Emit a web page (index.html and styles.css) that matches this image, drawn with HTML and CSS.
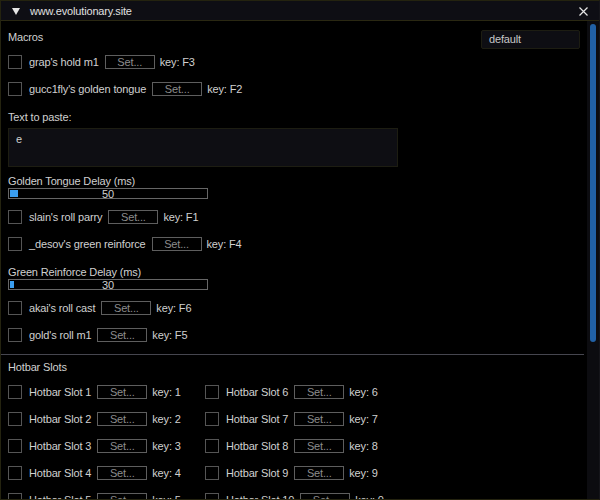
FILE: index.html
```html
<!DOCTYPE html>
<html lang="en">
<head>
    <meta name="viewport" content="width=device-width, initial-scale=1">
    <title>www.evolutionary.site</title>
    <link rel="stylesheet" href="styles.css">
</head>
<body>
    <div class="window">
        <div class="titlebar">
            <svg class="collapse" width="8" height="7" viewBox="0 0 8 7">
                <polygon points="0,0 8,0 4,7" fill="#e6e6e6"/>
            </svg>
            <span class="title">www.evolutionary.site</span>
            <svg class="close" width="9" height="9" viewBox="0 0 9 9">
                <path d="M0.5 0.5 L8.5 8.5 M8.5 0.5 L0.5 8.5" stroke="#e6e6e6" stroke-width="1.2"/>
            </svg>
        </div>
        <div class="body">
            <div class="content">
                <div class="header-row">
                    <span class="label">Macros</span>
                    <div class="input">default</div>
                </div>

                <div class="row first">
                    <div class="checkbox"></div>
                    <span class="name">grap's hold m1</span>
                    <div class="btn">Set...</div>
                    <span class="key">key: F3</span>
                </div>
                <div class="row">
                    <div class="checkbox"></div>
                    <span class="name">gucc1fly's golden tongue</span>
                    <div class="btn">Set...</div>
                    <span class="key">key: F2</span>
                </div>

                <div class="label section">Text to paste:</div>
                <div class="textarea">e</div>

                <div class="label slider-label">Golden Tongue Delay (ms)</div>
                <div class="slider">
                    <div class="grab grab-50"></div>
                    <span class="value">50</span>
                </div>

                <div class="row after-slider">
                    <div class="checkbox"></div>
                    <span class="name">slain's roll parry</span>
                    <div class="btn">Set...</div>
                    <span class="key">key: F1</span>
                </div>
                <div class="row">
                    <div class="checkbox"></div>
                    <span class="name">_desov's green reinforce</span>
                    <div class="btn">Set...</div>
                    <span class="key">key: F4</span>
                </div>

                <div class="label section">Green Reinforce Delay (ms)</div>
                <div class="slider">
                    <div class="grab grab-30"></div>
                    <span class="value">30</span>
                </div>

                <div class="row after-slider">
                    <div class="checkbox"></div>
                    <span class="name">akai's roll cast</span>
                    <div class="btn">Set...</div>
                    <span class="key">key: F6</span>
                </div>
                <div class="row">
                    <div class="checkbox"></div>
                    <span class="name">gold's roll m1</span>
                    <div class="btn">Set...</div>
                    <span class="key">key: F5</span>
                </div>

                <div class="separator"></div>

                <div class="label hotbar-title">Hotbar Slots</div>
                <div class="hotbar">
                    <div class="row"><div class="checkbox"></div><span class="name">Hotbar Slot 1</span><div class="btn">Set...</div><span class="key">key: 1</span></div>
                    <div class="row"><div class="checkbox"></div><span class="name">Hotbar Slot 6</span><div class="btn">Set...</div><span class="key">key: 6</span></div>
                    <div class="row"><div class="checkbox"></div><span class="name">Hotbar Slot 2</span><div class="btn">Set...</div><span class="key">key: 2</span></div>
                    <div class="row"><div class="checkbox"></div><span class="name">Hotbar Slot 7</span><div class="btn">Set...</div><span class="key">key: 7</span></div>
                    <div class="row"><div class="checkbox"></div><span class="name">Hotbar Slot 3</span><div class="btn">Set...</div><span class="key">key: 3</span></div>
                    <div class="row"><div class="checkbox"></div><span class="name">Hotbar Slot 8</span><div class="btn">Set...</div><span class="key">key: 8</span></div>
                    <div class="row"><div class="checkbox"></div><span class="name">Hotbar Slot 4</span><div class="btn">Set...</div><span class="key">key: 4</span></div>
                    <div class="row"><div class="checkbox"></div><span class="name">Hotbar Slot 9</span><div class="btn">Set...</div><span class="key">key: 9</span></div>
                    <div class="row"><div class="checkbox"></div><span class="name">Hotbar Slot 5</span><div class="btn">Set...</div><span class="key">key: 5</span></div>
                    <div class="row"><div class="checkbox"></div><span class="name">Hotbar Slot 10</span><div class="btn">Set...</div><span class="key">key: 0</span></div>
                </div>
            </div>
            <div class="scrollbar">
                <div class="thumb"></div>
            </div>
        </div>
    </div>
</body>
</html>
```

FILE: styles.css
```css
body {
    margin: 0;
    padding: 0;
    background-color: #000;
    font-family: 'Liberation Sans', Arial, sans-serif;
    font-size: 11px;
    letter-spacing: -0.15px;
    color: #d0d0d0;
    overflow: hidden;
}

.window {
    width: 600px;
    height: 500px;
    box-sizing: border-box;
    border: 1px solid #24230f;
    border-right-color: #15151a;
    display: flex;
    flex-direction: column;
    overflow: hidden;
}

.titlebar {
    height: 19px;
    flex-shrink: 0;
    background-color: #0e0e14;
    border-bottom: 1px solid #2a2812;
    display: flex;
    align-items: center;
    padding: 0 11px 0 11px;
    color: #e0e0e0;
}

.collapse {
    margin-right: 10px;
    margin-top: 1px;
}

.title {
    flex: 1;
    line-height: 14px;
}

.close {
    margin-top: 1px;
}

.body {
    flex: 1;
    display: flex;
    overflow: hidden;
}

.content {
    flex: 1;
    padding: 9px 7px 0 7px;
    overflow: hidden;
}

.scrollbar {
    width: 12px;
    flex-shrink: 0;
    background-color: #0c0c10;
    padding: 3px 3px 0 3px;
    box-sizing: border-box;
}

.thumb {
    width: 6px;
    height: 318px;
    background-color: #2161a6;
    border-radius: 3px;
}

.label {
    line-height: 14px;
}

.header-row {
    display: flex;
    justify-content: space-between;
    align-items: flex-start;
    height: 19px;
}

.input {
    width: 99px;
    height: 19px;
    box-sizing: border-box;
    background-color: #0e0e13;
    border: 1px solid #1d1d12;
    border-radius: 2px;
    padding-left: 7px;
    line-height: 17px;
    color: #c8c8c8;
}

.row {
    display: flex;
    align-items: center;
    height: 14px;
    margin-top: 13px;
    white-space: nowrap;
}

.row.first {
    margin-top: 6px;
}

.row.after-slider {
    margin-top: 11px;
}

.checkbox {
    width: 14px;
    height: 14px;
    box-sizing: border-box;
    border: 1px solid #555;
    margin-right: 7px;
    flex-shrink: 0;
}

.name {
    margin-right: 6px;
}

.btn {
    width: 50px;
    height: 14px;
    box-sizing: border-box;
    border: 1px solid #5e5e5e;
    color: #8c8c8c;
    text-align: center;
    line-height: 12px;
    margin-right: 5px;
    flex-shrink: 0;
}

.section {
    margin-top: 14px;
}

.textarea {
    width: 390px;
    height: 39px;
    box-sizing: border-box;
    margin-top: 4px;
    background-color: #0e0e13;
    border: 1px solid #1d1d12;
    padding: 3px 0 0 7px;
    line-height: 14px;
}

.slider-label {
    margin-top: 7px;
}

.slider {
    position: relative;
    width: 200px;
    height: 11px;
    box-sizing: border-box;
    border: 1px solid #666;
    text-align: center;
    line-height: 10px;
}

.grab {
    position: absolute;
    left: 1px;
    top: 1px;
    height: 7px;
    background-color: #3a9ef0;
}

.grab-50 {
    width: 8px;
}

.grab-30 {
    width: 4px;
}

.value {
    position: relative;
}

.separator {
    height: 1px;
    background-color: #46464f;
    margin: 12px -4px 0 -8px;
}

.hotbar-title {
    margin-top: 5px;
}

.hotbar {
    display: grid;
    grid-template-columns: 197px 1fr;
    margin-top: -2px;
}
```
